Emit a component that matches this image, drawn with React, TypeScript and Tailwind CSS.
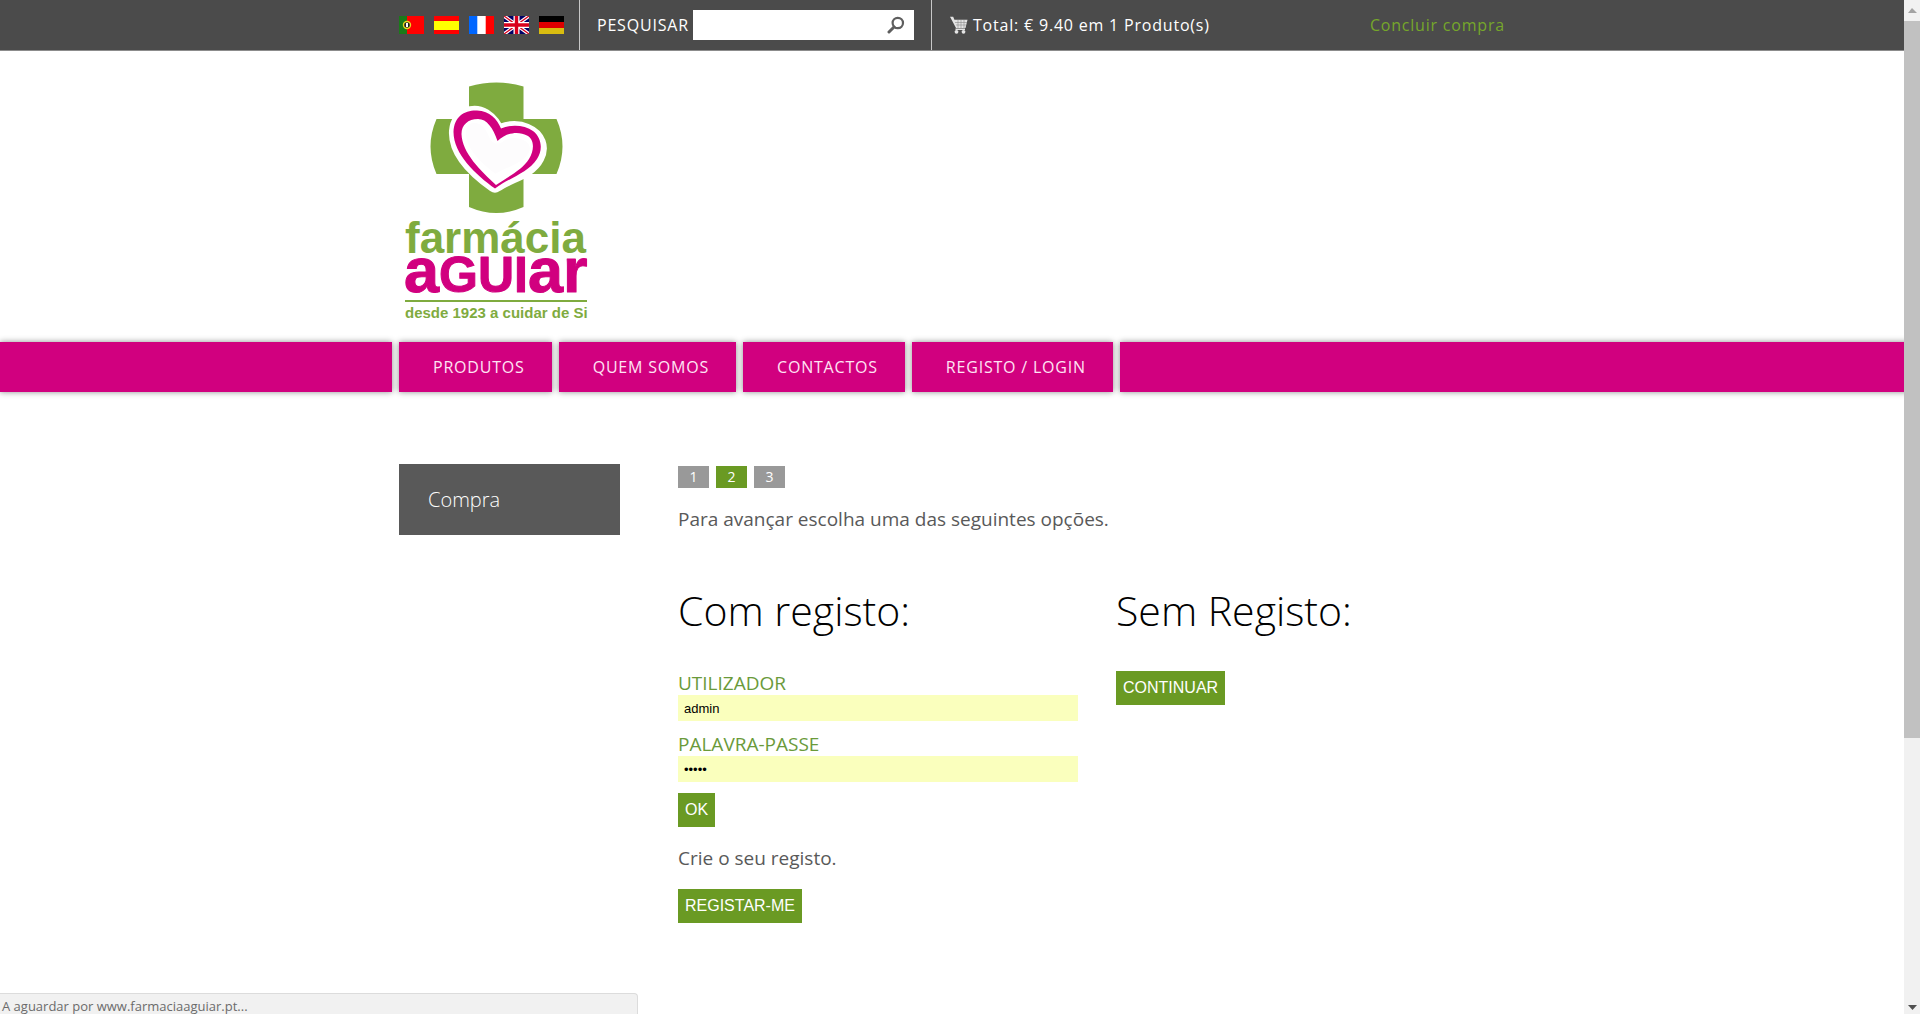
import { useState } from 'react'
import type { ReactNode } from 'react'

const steps = [1, 2, 3]
const menu = ['Produtos', 'Quem somos', 'Contactos', 'Registo / Login']

const flags: { name: string; art: ReactNode }[] = [
  {
    name: 'Português',
    art: (
      <>
        <path fill="#f00" d="M0 0h25v18H0z" />
        <path fill="#1a7a1a" d="M0 0h8v18H0z" />
        <circle cx="8" cy="9" r="3.5" fill="#222" stroke="#e8d820" strokeWidth="1.4" />
        <path fill="#fff" d="M7 7h2v4H7z" />
      </>
    ),
  },
  {
    name: 'Español',
    art: (
      <>
        <path fill="#f00" d="M0 0h25v18H0z" />
        <path fill="#ff0" d="M0 5h25v9H0z" />
      </>
    ),
  },
  {
    name: 'Français',
    art: (
      <>
        <path fill="#fff" d="M0 0h25v18H0z" />
        <path fill="#06f" d="M0 0h8.300v18H0z" />
        <path fill="#f00" d="M16.700 0H25v18h-8.300z" />
      </>
    ),
  },
  {
    name: 'English',
    art: (
      <>
        <path fill="#006" d="M0 0h25v18H0z" />
        <path stroke="#fff" strokeWidth="3.6" d="M0 0l25 18M25 0L0 18" />
        <path stroke="#d8001c" strokeWidth="1.3" d="M0 0l25 18M25 0L0 18" />
        <path stroke="#fff" strokeWidth="6" d="M12.500 0v18M0 9h25" />
        <path stroke="#d8001c" strokeWidth="3.400" d="M12.500 0v18M0 9h25" />
      </>
    ),
  },
  {
    name: 'Deutsch',
    art: (
      <>
        <path d="M0 0h25v6H0z" />
        <path fill="#d00" d="M0 6h25v6H0z" />
        <path fill="#d9bd10" d="M0 12h25v6H0z" />
      </>
    ),
  },
]

function Logo() {
  return (
    <svg width="184" height="242" viewBox="0 0 184 242" role="img" aria-label="Farmácia Aguiar">
      <path
        fill="#7fab3f"
        d="M65 4.500Q92.500-3.500 119.500 4.500V37H152.500Q164.500 64.500 152.500 92H119.500V125Q92.500 137 65 125V92H32.500Q20.500 64.500 32.500 37H65z"
      />
      <path
        fill="#fdfcfd"
        stroke="#fff"
        strokeWidth="17"
        strokeLinejoin="round"
        d="M91 102C74 90 52 71 53.500 49C55 33 70 29 80 35C88 40 91 46 93.500 53C100 47 113 46 122 50C134 55 137 66 132 75C125 89 106 92 91 102z"
      />
      <path
        fill="#d1007f"
        fillRule="evenodd"
        d="M91 106.500C72 93 49.500 72 49.500 50C50 34 61 28 73 28.500C86 29 93 37 97 46.500C107 42 121 43 129 49C138 56 139 68 133 77C124 91 105 96 91 106.500zM92 103C105 94 118 88 125 77C131 67 130 57 123 53.500C115 49 103 50 93.500 59C89 46 83 37 74 37C64 37 57.500 43 57.500 52C58 71 77 89 92 103z"
      />
      <g fontFamily="'Liberation Sans', sans-serif" fontWeight="700" strokeLinejoin="round">
        <text x="1" y="171" fontSize="44" fill="#7fab3f">farmácia</text>
        <text x="0" y="210" fontSize="63" fill="#d1007f" stroke="#d1007f">
          a<tspan fontSize="50">GUI</tspan>ar
        </text>
        <path fill="#7fab3f" d="M1 218h182v2H1z" />
        <text x="1" y="236" fontSize="15" fill="#7fab3f">desde 1923 a cuidar de Si</text>
      </g>
    </svg>
  )
}

function Cart() {
  return (
    <svg width="18" height="18" viewBox="0 0 18 18" aria-hidden="true">
      <path d="M0 .8h3.200l1.200 3H17.500l-2 8.200H6z" fill="#e4e4e4" />
      <path d="M5 6.500h12M6 9h10M8 4v8M11 4v8M14 4v8" stroke="#8a8a8a" strokeWidth=".6" />
      <path d="M5.500 12.500h9.500v1.500H5.500z" fill="#e4e4e4" />
      <circle cx="6.500" cy="15.800" r="1.900" fill="#e4e4e4" />
      <circle cx="13.500" cy="15.800" r="1.900" fill="#e4e4e4" />
    </svg>
  )
}

function TopBar() {
  return (
    <header className="h-[51px] border-b border-[#8c8c8c] bg-[#4b4b4b] text-base tracking-wider text-white">
      <div className="mx-auto flex h-full max-w-[1106px]">
        <div className="flex w-[181px] items-center gap-[10px] border-r border-[#c8c8c8]">
          {flags.map(f => (
            <a key={f.name} href="#" aria-label={f.name}>
              <svg width="25" height="18" viewBox="0 0 25 18">{f.art}</svg>
            </a>
          ))}
        </div>
        <form className="flex w-[352px] items-center border-r border-[#c8c8c8] pl-[17px]" onSubmit={e => e.preventDefault()}>
          <label htmlFor="search" className="w-[96px] uppercase">Pesquisar</label>
          <div className="flex h-[30px] w-[221px] items-center bg-white pr-[9px]">
            <input id="search" className="h-full w-full min-w-0 px-2 text-black outline-none" />
            <button aria-label="Procurar" className="shrink-0">
              <svg width="18" height="18" viewBox="0 0 18 18" fill="none" stroke="#5e5e5e">
                <circle cx="10.800" cy="7" r="5.200" strokeWidth="2.200" />
                <path d="M7 11l-5 5" strokeWidth="3" strokeLinecap="round" />
              </svg>
            </button>
          </div>
        </form>
        <div className="flex flex-1 items-center pl-[18px]">
          <Cart />
          <span className="ml-[5px]">Total: € 9.40 em 1 Produto(s)</span>
          <a href="#" className="ml-auto text-[#76a72a]">Concluir compra</a>
        </div>
      </div>
    </header>
  )
}

function Menu() {
  const bar = 'h-[50px] bg-[#d1007f] shadow-[0_0_6px_rgba(0,0,0,0.45)]'
  return (
    <nav className="flex gap-[7px]">
      <div className={`${bar} flex-1`} />
      {/* last cell runs on past the window edge */}
      <div className="flex w-full max-w-[1106px] gap-[7px]">
        {menu.map(m => (
          <a key={m} href="#" className={`${bar} flex items-center pr-[27px] pl-[34px] text-base tracking-wider text-[#ffe3f4] uppercase`}>
            {m}
          </a>
        ))}
        <div className={`${bar} -mr-[50vw] flex-1`} />
      </div>
      <div className="flex-1" />
    </nav>
  )
}

function GreenButton({ children }: { children: ReactNode }) {
  return (
    <button className="block h-[34px] bg-[#6a9a23] px-[7px] font-['Liberation_Sans',sans-serif] text-base text-white">
      {children}
    </button>
  )
}

function Field({ id, label, type, value, onChange }: {
  id: string
  label: string
  type: string
  value: string
  onChange: (v: string) => void
}) {
  return (
    <div className="mb-[11px]">
      <label htmlFor={id} className="block text-[19px]/[24px] text-[#6a9a3a] uppercase">{label}</label>
      <input
        id={id}
        type={type}
        value={value}
        onChange={e => onChange(e.target.value)}
        className="block h-[26px] w-full bg-[#faffbd] px-[6px] font-['Liberation_Sans',sans-serif] text-[13px] text-black outline-none"
      />
    </div>
  )
}

export default function App() {
  const [user, setUser] = useState('admin')
  const [pass, setPass] = useState('admin')

  return (
    <div className="flex h-screen overflow-hidden bg-white font-['Open_Sans',sans-serif]">
      <div className="min-w-0 flex-1 overflow-hidden">
        <TopBar />
        <div className="mx-auto max-w-[1106px] pt-[31px] pl-[5px]">
          <a href="#" className="inline-block align-top"><Logo /></a>
        </div>
        <div className="pt-[18px]">
          <Menu />
        </div>

        <div className="mx-auto flex max-w-[1106px] items-start pt-[72px]">
          <aside className="w-[221px] bg-[#595959]">
            <a href="#" className="flex h-[71px] items-center px-[29px] text-xl font-light text-white">Compra</a>
          </aside>
          <main className="ml-[58px] flex-1 pt-[2px] text-[19px] text-[#595959]">
            <ol className="flex gap-[7px]">
              {steps.map(s => (
                <li key={s} className={`flex h-[22px] w-[31px] items-center justify-center text-sm text-white ${s === 2 ? 'bg-[#6a9a23]' : 'bg-[#999]'}`}>
                  {s}
                </li>
              ))}
            </ol>
            <p className="mt-[17px] leading-7">Para avançar escolha uma das seguintes opções.</p>

            <div className="mt-[47px] flex gap-[38px]">
              <section className="w-[400px]">
                <h1 className="mb-[31px] text-[41px]/[60px] font-light text-black">Com registo:</h1>
                <form onSubmit={e => e.preventDefault()}>
                  <Field id="user" label="Utilizador" type="text" value={user} onChange={setUser} />
                  <Field id="pass" label="Palavra-passe" type="password" value={pass} onChange={setPass} />
                  <GreenButton>OK</GreenButton>
                </form>
                <p className="my-[17px] leading-7">Crie o seu registo.</p>
                <GreenButton>REGISTAR-ME</GreenButton>
              </section>
              <section>
                <h1 className="mb-[31px] text-[41px]/[60px] font-light text-black">Sem Registo:</h1>
                <GreenButton>CONTINUAR</GreenButton>
              </section>
            </div>
          </main>
        </div>
      </div>

      <div className="flex w-4 flex-col items-center bg-[#f1f1f1]">
        <svg width="16" height="21" viewBox="0 0 16 21"><path fill="#a3a3a3" d="M4 13l4-5 5 5z" /></svg>
        <div className="w-full basis-[717px] bg-[#c1c1c1]" />
        <svg className="mt-auto" width="16" height="12" viewBox="0 0 16 12"><path fill="#505050" d="M4 3h9l-4.500 5z" /></svg>
      </div>

      <div className="fixed bottom-0 left-0 h-[21px] w-[638px] overflow-hidden rounded-tr border-t border-r border-[#dcdcdc] bg-[#f1f1f1] pl-[2px] text-[13px]/[24px] text-[#6b6b6b]">
        A aguardar por www.farmaciaaguiar.pt...
      </div>
    </div>
  )
}
